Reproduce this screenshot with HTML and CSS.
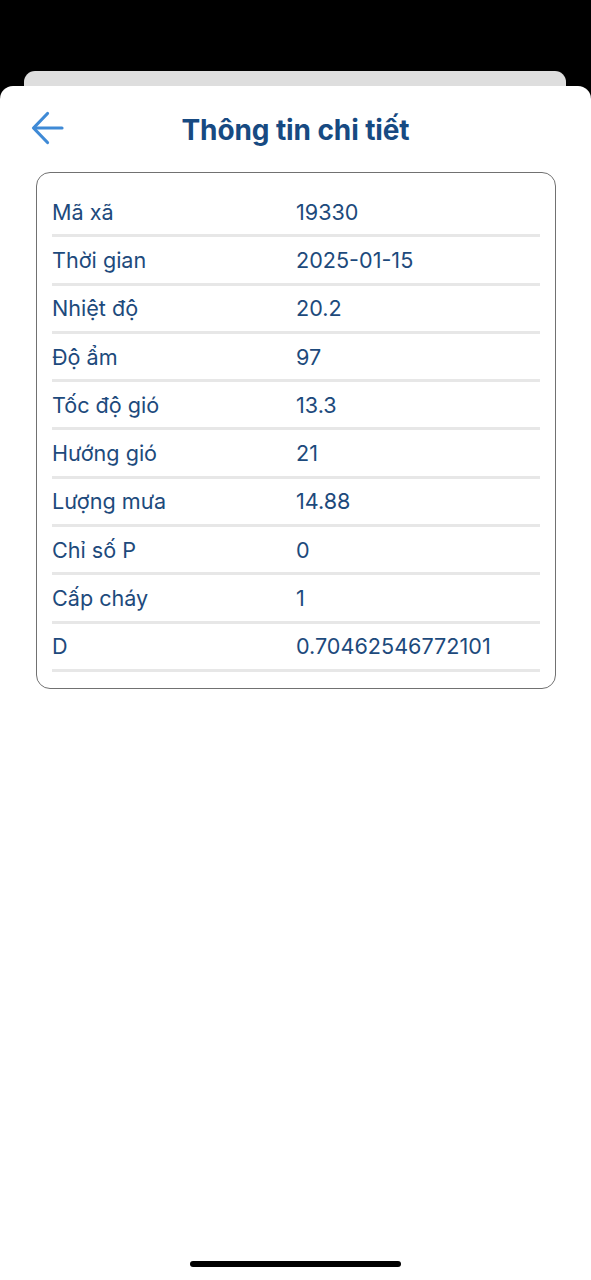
FILE: index.html
```html
<!DOCTYPE html>
<html lang="vi">
<head>
  <meta charset="UTF-8">
  <meta name="viewport" content="width=device-width, initial-scale=1.0">
  <title>Thông tin chi tiết</title>
  <link rel="stylesheet" href="styles.css">
</head>
<body>
  <div class="screen">
    <div class="behind"></div>
    <div class="sheet">
      <div class="header">
        <button class="back" aria-label="Quay lại">
          <svg width="34" height="34" viewBox="0 0 34 34" fill="none" stroke="#3f8ad6" stroke-width="3.2" stroke-linecap="round" stroke-linejoin="round">
            <path d="M31 17H3.5"/>
            <path d="M16.5 2.5L2.5 17l14 14.5"/>
          </svg>
        </button>
        <h1 class="title">Thông tin chi tiết</h1>
      </div>

      <div class="card">
        <div class="row"><span>Mã xã</span><span>19330</span></div>
        <div class="row"><span>Thời gian</span><span>2025-01-15</span></div>
        <div class="row"><span>Nhiệt độ</span><span>20.2</span></div>
        <div class="row"><span>Độ ẩm</span><span>97</span></div>
        <div class="row"><span>Tốc độ gió</span><span>13.3</span></div>
        <div class="row"><span>Hướng gió</span><span>21</span></div>
        <div class="row"><span>Lượng mưa</span><span>14.88</span></div>
        <div class="row"><span>Chỉ số P</span><span>0</span></div>
        <div class="row"><span>Cấp cháy</span><span>1</span></div>
        <div class="row"><span>D</span><span>0.70462546772101</span></div>
      </div>

      <div class="spacer"></div>
      <div class="home-bar"></div>
    </div>
  </div>
</body>
</html>
```

FILE: styles.css
```css
* {
  box-sizing: border-box;
}

body {
  margin: 0;
  background-color: #000;
  font-family: Inter, "Noto Sans", sans-serif;
}

.screen {
  height: 1280px;
  display: flex;
  flex-direction: column;
  padding-top: 71px;
}

.behind {
  height: 16px;
  margin: 0 25px 0 24px;
  background-color: #dedede;
  border-radius: 11px 11px 0 0;
  flex-shrink: 0;
}

.sheet {
  flex: 1;
  background-color: #fff;
  border-radius: 13px 13px 0 0;
  margin-top: -1px;
  display: flex;
  flex-direction: column;
  padding: 0 36px 0 36px;
}

.header {
  height: 86px;
  display: flex;
  align-items: center;
  justify-content: center;
  position: relative;
}

.back {
  position: absolute;
  left: -5px;
  top: 25px;
  background: none;
  border: none;
  padding: 0;
  cursor: pointer;
  display: flex;
}

.title {
  margin: 0;
  font-size: 28px;
  font-weight: 700;
  color: #174a82;
  letter-spacing: -0.1px;
  padding-top: 1px;
}

.card {
  border: 1px solid #717171;
  border-radius: 14px;
  padding: 16px 15px 16px 15px;
  margin-right: -1px;
}

.row {
  display: grid;
  grid-template-columns: 1fr 1fr;
  align-items: center;
  height: 48.3px;
  border-bottom: 3px solid #e7e7e7;
  font-size: 21.6px;
  color: #1d4a7c;
}

.spacer {
  flex: 1;
}

.home-bar {
  width: 211px;
  height: 6px;
  border-radius: 3px;
  background-color: #000;
  align-self: center;
  margin-bottom: 13px;
}
```
